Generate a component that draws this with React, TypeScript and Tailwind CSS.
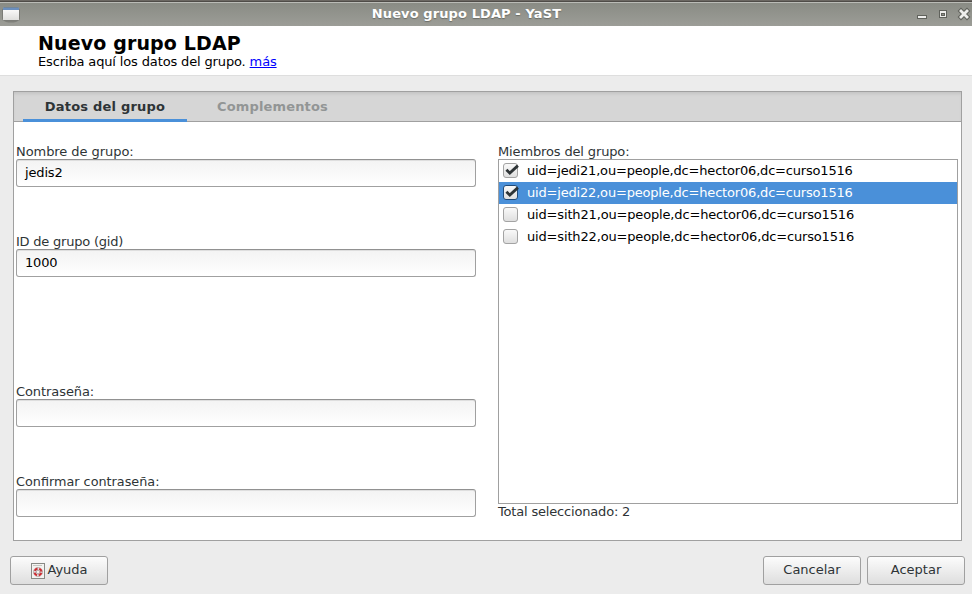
import React from "react";

type FieldProps = { label: string; value?: string; className?: string; labelClass?: string };

function Field({ label, value = "", className = "", labelClass = "" }: FieldProps) {
  return (
    <div className={`flex flex-col ${className}`}>
      <label className={`h-[15px] leading-[15px] whitespace-nowrap text-[#2e3436] ${labelClass}`}>{label}</label>
      <div className="flex h-7 items-center rounded-[3px] border border-[#a0a0a0] border-t-[#919191] bg-linear-to-b from-[#f3f3f3] to-white pb-px pl-[8px] tracking-[-0.15px] text-black shadow-[inset_0_1px_0_#dedede]">
        {value}
      </div>
    </div>
  );
}

function Checkbox({ checked, selected }: { checked: boolean; selected: boolean }) {
  return (
    <svg width="18" height="18" viewBox="0 0 18 18" className="shrink-0">
      <defs>
        <linearGradient id="boxFill" x1="0" y1="0" x2="0" y2="1">
          <stop offset="0" stopColor="#fafafa" />
          <stop offset="1" stopColor="#dedede" />
        </linearGradient>
      </defs>
      <rect x="1.5" y="1.5" width="14" height="14" rx="2.5" fill="url(#boxFill)" stroke={selected ? "#204a78" : "#a3a3a3"} />
      {checked && <path d="M4.4 7.8 L7.8 11 L15.9 3.6" fill="none" stroke="#2e3436" strokeWidth="2.8" />}
    </svg>
  );
}

const members = [
  { uid: "jedi21", checked: true, tracking: "tracking-[-0.185px]" },
  { uid: "jedi22", checked: true, selected: true, tracking: "tracking-[-0.185px]" },
  { uid: "sith21", checked: false, tracking: "tracking-[-0.16px]" },
  { uid: "sith22", checked: false, tracking: "tracking-[-0.16px]" },
];

const button =
  "flex h-[29px] w-[98px] items-center justify-center rounded-[3px] border border-[#a0a0a0] bg-linear-to-b from-[#fcfcfc] to-[#dedede] pb-px text-[#2e3436]";

export default function App() {
  return (
    <div className="flex h-[594px] w-[972px] flex-col overflow-hidden bg-[#ececec] font-['DejaVu_Sans',sans-serif] text-[13px] leading-4">
      <header className="flex h-[26px] shrink-0 items-center border-t border-[#6b6762] bg-linear-to-b from-[#888a83] to-[#9c9d97] pl-[2px] shadow-[inset_0_1px_0_#4f4c48,inset_0_2px_0_#babbb6]">
        <svg width="18" height="25" viewBox="0 0 18 25">
          <defs>
            <linearGradient id="winFill" x1="0" y1="0" x2="0" y2="1">
              <stop offset="0" stopColor="#ffffff" />
              <stop offset="1" stopColor="#dddddb" />
            </linearGradient>
          </defs>
          <ellipse cx="9" cy="19.5" rx="7" ry="2" fill="#7f807a" />
          <rect x="0.5" y="6.5" width="17" height="13" rx="1" fill="url(#winFill)" stroke="#7b7c77" />
          <rect x="1" y="6.5" width="16" height="2.5" fill="#6b8fbe" />
        </svg>
        <div className="flex flex-1 justify-center pr-[3px] font-bold tracking-[0.1px] whitespace-nowrap text-white [text-shadow:0_1px_1px_#6a6c66]">
          Nuevo grupo LDAP - YaST
        </div>
        <svg width="56" height="25" viewBox="0 0 56 25">
          <rect x="1.5" y="14.5" width="9" height="3" fill="#eeeeec" stroke="#60625c" />
          <rect x="23.5" y="9.5" width="7" height="7" fill="#eeeeec" stroke="#60625c" />
          <rect x="25.5" y="12.5" width="3" height="2" fill="#90918b" stroke="#60625c" />
          <path d="M45 10 L51 16 M51 10 L45 16" stroke="#60625c" strokeWidth="4.8" strokeLinecap="square" />
          <path d="M45 10 L51 16 M51 10 L45 16" stroke="#eeeeec" strokeWidth="2.8" strokeLinecap="square" />
        </svg>
      </header>

      <section className="flex h-[50px] shrink-0 flex-col border-b border-[#dedede] bg-white pt-[7px] pl-[38px] text-black">
        <h1 className="h-[21px] text-[19px] leading-[21px] font-bold tracking-[0.14px] whitespace-nowrap">Nuevo grupo LDAP</h1>
        <p className="h-4 tracking-[-0.14px] whitespace-nowrap">
          Escriba aquí los datos del grupo. <a className="text-[#0000ff] underline">más</a>
        </p>
      </section>

      <main className="mt-[15px] ml-[13px] flex h-[450px] w-[949px] shrink-0 flex-col border border-[#a0a0a0] bg-white">
        <nav className="flex h-[30px] shrink-0 border-b border-[#a0a0a0] bg-[#d6d6d6] pl-[9px] font-bold shadow-[inset_0_3px_3px_-1px_#c4c4c4]">
          <div className="z-10 -mb-px flex h-[30px] w-[164px] justify-center border-b-3 border-[#4a90d9] pt-[7px] tracking-[0.2px] text-[#2e3436]">
            Datos del grupo
          </div>
          <div className="w-[171px] pt-[7px] text-center tracking-[0.15px] text-[#929595]">Complementos</div>
        </nav>
        <div className="flex flex-1 pt-[22px] pl-[2px]">
          <div className="flex w-[460px] flex-col">
            <Field label="Nombre de grupo:" value="jedis2" labelClass="tracking-[-0.06px]" />
            <Field label="ID de grupo (gid)" value="1000" className="mt-[47px]" labelClass="tracking-[-0.22px]" />
            <Field label="Contraseña:" className="mt-[107px]" labelClass="tracking-[-0.08px]" />
            <Field label="Confirmar contraseña:" className="mt-[47px]" labelClass="text-[12.8px]" />
          </div>
          <div className="ml-[22px] flex w-[460px] flex-col text-[#2e3436]">
            <label className="h-[15px] leading-[15px] tracking-[-0.14px]">Miembros del grupo:</label>
            <ul className="h-[345px] border border-[#a0a0a0] text-black">
              {members.map((m) => (
                <li key={m.uid} className={`flex h-[22px] items-center pl-[3px] ${m.selected ? "bg-[#4a90d9] text-white" : ""}`}>
                  <Checkbox checked={m.checked} selected={!!m.selected} />
                  <span className={`ml-[7px] whitespace-nowrap ${m.tracking}`}>uid={m.uid},ou=people,dc=hector06,dc=curso1516</span>
                </li>
              ))}
            </ul>
            <div className="h-4 tracking-[-0.18px]">Total seleccionado: 2</div>
          </div>
        </div>
      </main>

      <footer className="mt-[15px] flex pr-[7px] pl-[10px]">
        <button className={button}>
          <svg width="14" height="16" viewBox="0 0 14 16" className="mt-px mr-[2px] ml-px">
            <rect x="0.5" y="0.5" width="13" height="15" fill="#f3f3f1" stroke="#888a85" />
            <path d="M2 2.5H11" stroke="#c5c7c2" />
            <circle cx="7" cy="9" r="4.6" fill="#ffffff" stroke="#a9a39f" strokeWidth="0.6" />
            <circle cx="7" cy="9" r="3.4" fill="none" stroke="#d8232a" strokeWidth="2.2" strokeDasharray="3.6 1.74" strokeDashoffset="-0.87" />
            <path d="M6 4.6V7.2M8 4.6V7.2M6 10.8V13.4M8 10.8V13.4M2.6 8H5.2M2.6 10H5.2M8.8 8H11.4M8.8 10H11.4" stroke="#8c7070" strokeWidth="0.5" />
            <circle cx="7" cy="9" r="1.8" fill="#f3f3f1" stroke="#8c7070" strokeWidth="0.6" />
          </svg>
          Ayuda
        </button>
        <button className={`${button} ml-auto`}>Cancelar</button>
        <button className={`${button} ml-[6px]`}>Aceptar</button>
      </footer>
    </div>
  );
}
